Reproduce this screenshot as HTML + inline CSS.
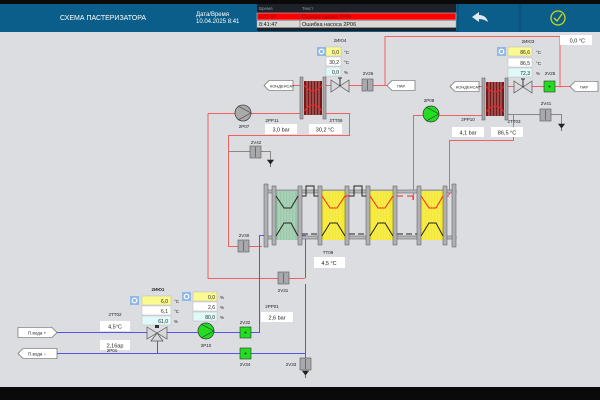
<!DOCTYPE html>
<html><head><meta charset="utf-8"><style>
html,body{margin:0;padding:0;width:600px;height:400px;overflow:hidden;background:#dcdde1;font-family:"Liberation Sans",sans-serif}
svg{display:block}
text{font-family:"Liberation Sans",sans-serif}
</style></head><body>
<svg width="600" height="400" viewBox="0 0 600 400" xmlns="http://www.w3.org/2000/svg">
<defs>
<g id="gear"><rect width="9" height="9" fill="#8fb8e8"/><circle cx="4.5" cy="4.5" r="2.3" fill="none" stroke="#fff" stroke-width="1.2"/></g>
<g id="hx"><rect x="0" y="0" width="3" height="42" fill="#a8a8ac" stroke="#555" stroke-width=".5"/><rect x="23" y="0" width="3" height="42" fill="#a8a8ac" stroke="#555" stroke-width=".5"/>
<rect x="4" y="4" width="18" height="34" fill="#7a1818"/>
<g stroke="#e8c8c8" stroke-width=".6"><line x1="7" y1="4" x2="7" y2="38"/><line x1="10" y1="4" x2="10" y2="38"/><line x1="13" y1="4" x2="13" y2="38"/><line x1="16" y1="4" x2="16" y2="38"/><line x1="19" y1="4" x2="19" y2="38"/></g>
<path d="M4 8 Q13 20 22 8 M4 34 Q13 22 22 34" stroke="#ff2020" fill="none" stroke-width="1"/></g>
<g id="valve"><path d="M0 0 L9 6 L0 12Z M18 0 L9 6 L18 12Z" fill="#d8d8dc" stroke="#555" stroke-width=".7"/><line x1="9" y1="6" x2="9" y2="-2" stroke="#333"/><path d="M7 -2 H11" stroke="#333"/></g>
<g id="gv"><rect width="11" height="12" fill="#a9a9ad" stroke="#555" stroke-width=".6"/><line x1="5.5" y1="1" x2="5.5" y2="11" stroke="#444" stroke-width=".6"/></g>
<g id="grv"><rect width="11" height="11" fill="#22dd22" stroke="#333" stroke-width=".6"/><circle cx="5.5" cy="5.5" r="1" fill="#333"/></g>
<g id="drain"><path d="M-3 0 L3 0 L0 4Z M0 4 V7" fill="#222" stroke="#222" stroke-width=".6"/></g>
</defs>
<!-- header -->
<rect x="0" y="0" width="600" height="32" fill="#0b5e8a"/>
<rect x="0" y="0" width="600" height="4" fill="#0a0a0a"/>
<text x="60" y="20" fill="#fff" font-size="7">СХЕМА ПАСТЕРИЗАТОРА</text>
<text x="196" y="16" fill="#fff" font-size="6">Дата/Время</text>
<text x="196" y="23" fill="#fff" font-size="6">10.04.2025 8:41</text>
<rect x="257" y="4" width="199" height="27" fill="#1c2228"/>
<text x="259" y="10" fill="#8899a8" font-size="4.5">Время</text><text x="302" y="10" fill="#8899a8" font-size="4.5">Текст</text>
<rect x="257" y="13" width="199" height="7" fill="#ff0000" stroke="#ddd" stroke-width=".5"/>
<rect x="257" y="20.5" width="199" height="7" fill="#d8d8d8" stroke="#999" stroke-width=".5"/>
<line x1="300" y1="13" x2="300" y2="27.5" stroke="#555" stroke-width=".5"/>
<text x="259" y="18.5" fill="#880000" font-size="5">8:41:47</text><text x="302" y="18.5" fill="#880000" font-size="5">Ошибка насоса 2P06</text>
<text x="259" y="26" fill="#111" font-size="5.5">8:41:47</text><text x="302" y="26" fill="#111" font-size="5.5">Ошибка насоса 2P06</text>
<line x1="458" y1="4" x2="458" y2="32" stroke="#07456a"/><line x1="520" y1="4" x2="520" y2="32" stroke="#07456a"/>
<path d="M472 17 L479 12 L479 15 Q486 15 488 22 Q484 19 479 19 L479 22Z" fill="#e0e8f0"/>
<circle cx="558" cy="18" r="7" fill="none" stroke="#c8d820" stroke-width="1.3"/><path d="M554 18 L557 21 L562 14" fill="none" stroke="#c8d820" stroke-width="1.3"/>
<!-- bottom bar -->
<rect x="0" y="387" width="600" height="13" fill="#0a0a0a"/>

<!-- red lines -->
<g stroke="#f06060" stroke-width="1" fill="none">
<path d="M293 85.5 H300 M326 85.5 H331 M349 85.5 H387 M385 85.5 V36.5 H560 V87.5"/>
<path d="M479 86.5 H482 M508 86.5 H514 M532 86.5 H570"/>
<path d="M208 113.5 H235 M251 113.5 H300 M326 113.5 H349.5 V135.5 H228.5 V246.5 H238 M249 246.5 H262"/>
<path d="M208 113.5 V278.5 H305"/>
<path d="M413.5 200 V115.5 H423 M439 115.5 H482"/>
<path d="M449.5 195 V140.5 H513.5 V115"/>
<path d="M413 195 V200 M449 190 V195"/>
</g>
<g stroke="#888" stroke-width="1" fill="none">
<path d="M228 151.5 H250 M261 151.5 H270.5 V160"/>
<path d="M508 114.5 H540 M551 114.5 H561.5 V124"/>
</g>
<!-- blue lines -->
<g stroke="#5555ee" stroke-width="1" fill="none">
<path d="M57 332.5 H147 M164 332.5 H198 M214 332.5 H240 M250 332.5 H259.5 V235.5 H264"/>
<path d="M57 353.5 H240 M250 353.5 H305.5 V358 M305.5 235 V278 M305.5 284 V358 M157.5 339 V353.5 M298 235.5 H305.5"/>
</g>

<!-- top left exchanger -->
<use href="#hx" x="300" y="77"/>
<use href="#gear" x="317" y="47"/>
<rect x="326" y="47" width="15" height="9" fill="#fafa90" stroke="#bbb" stroke-width=".5"/>
<rect x="326" y="57" width="15" height="9" fill="#fff" stroke="#bbb" stroke-width=".5"/>
<rect x="326" y="67" width="15" height="9" fill="#e0fafa" stroke="#bbb" stroke-width=".5"/>
<g font-size="5" fill="#222" text-anchor="end"><text x="339" y="54">0,0</text><text x="339" y="64">30,2</text><text x="339" y="74">0,0</text></g>
<g font-size="4.5" fill="#222"><text x="344" y="54">°C</text><text x="344" y="64">°C</text><text x="344" y="74">%</text></g>
<text x="340" y="42" font-size="4.5" fill="#222" text-anchor="middle">2ИЮ4</text>
<use href="#valve" x="331" y="80"/>
<use href="#gv" x="362" y="79"/><text x="368" y="75" font-size="4.5" fill="#222" text-anchor="middle">2V26</text>
<path d="M392 80.5 H415 V90.5 H392 L387 85.5Z" fill="#fff" stroke="#555" stroke-width=".6"/><text x="397" y="87.5" font-size="4" fill="#222">ПАР</text>
<path d="M269 80.5 H293 V90.5 H269 L264 85.5Z" fill="#fff" stroke="#555" stroke-width=".6"/><text x="270" y="87.5" font-size="4" fill="#222">КОНДЕНСАТ</text>
<circle cx="243" cy="113" r="8" fill="#aaa" stroke="#444" stroke-width=".8"/><path d="M238 106 L251 113 L238 120" fill="none" stroke="#444" stroke-width=".7"/>
<text x="244" y="128" font-size="4.5" fill="#222" text-anchor="middle">2P07</text>
<text x="272" y="122" font-size="4.5" fill="#222" text-anchor="middle">2PP11</text>
<rect x="265" y="124" width="32" height="10" fill="#fff"/><text x="281" y="131.5" font-size="5.5" fill="#222" text-anchor="middle">3,0 bar</text>
<text x="336" y="122" font-size="4.5" fill="#222" text-anchor="middle">2TT06</text>
<rect x="309" y="124" width="33" height="10" fill="#fff"/><text x="325" y="131.5" font-size="5.5" fill="#222" text-anchor="middle">30,2 °C</text>
<use href="#gv" x="250" y="146"/><text x="256" y="144" font-size="4.5" fill="#222" text-anchor="middle">2V42</text>
<use href="#drain" x="270.5" y="160"/>

<!-- top right -->
<rect x="560" y="35" width="32" height="10" fill="#fff"/><text x="585" y="42.5" font-size="5.5" fill="#222" text-anchor="end">0,0 °C</text>
<use href="#hx" x="482" y="78"/>
<use href="#gear" x="497" y="47"/>
<rect x="508" y="47" width="24" height="9" fill="#fafa90" stroke="#bbb" stroke-width=".5"/>
<rect x="508" y="58" width="24" height="9" fill="#fff" stroke="#bbb" stroke-width=".5"/>
<rect x="508" y="68" width="24" height="9" fill="#e0fafa" stroke="#bbb" stroke-width=".5"/>
<g font-size="5" fill="#222" text-anchor="end"><text x="530" y="54">86,6</text><text x="530" y="65">86,5</text><text x="530" y="75">72,3</text></g>
<g font-size="4.5" fill="#222"><text x="536" y="54">°C</text><text x="536" y="65">°C</text><text x="536" y="75">%</text></g>
<text x="528" y="43" font-size="4.5" fill="#222" text-anchor="middle">2ИЮ3</text>
<use href="#valve" x="514" y="81"/>
<use href="#grv" x="544" y="81"/><text x="550" y="75" font-size="4.5" fill="#222" text-anchor="middle">2V25</text>
<path d="M575 81.5 H598 V91.5 H575 L570 86.5Z" fill="#fff" stroke="#555" stroke-width=".6"/><text x="580" y="88.5" font-size="4" fill="#222">ПАР</text>
<path d="M455 81.5 H479 V91.5 H455 L450 86.5Z" fill="#fff" stroke="#555" stroke-width=".6"/><text x="456" y="88.5" font-size="4" fill="#222">КОНДЕНСАТ</text>
<circle cx="431" cy="114" r="8" fill="#22dd22" stroke="#333" stroke-width=".7"/><path d="M426 107 L439 114 L426 121" fill="none" stroke="#333" stroke-width=".6"/>
<text x="429" y="102" font-size="4.5" fill="#222" text-anchor="middle">2P08</text>
<text x="468" y="121" font-size="4.5" fill="#222" text-anchor="middle">2PP10</text>
<rect x="452" y="127" width="32" height="10" fill="#fff"/><text x="468" y="134.5" font-size="5.5" fill="#222" text-anchor="middle">4,1 bar</text>
<text x="514" y="123" font-size="4.5" fill="#222" text-anchor="middle">2TT03</text>
<rect x="491" y="127" width="32" height="10" fill="#fff"/><text x="507" y="134.5" font-size="5.5" fill="#222" text-anchor="middle">86,5 °C</text>
<use href="#gv" x="540" y="109"/><text x="546" y="105" font-size="4.5" fill="#222" text-anchor="middle">2V41</text>
<use href="#drain" x="561.5" y="124"/>

<!-- pasteurizer -->
<g fill="none" stroke="#666" stroke-width=".6">
<rect x="266" y="190" width="190" height="3" fill="#b8b8bc"/>
<rect x="266" y="236" width="190" height="3" fill="#b8b8bc"/>
</g>
<rect x="276" y="191" width="22" height="49" fill="#9ac8a8"/>
<rect x="322" y="191" width="23" height="49" fill="#f5e830"/>
<rect x="370" y="191" width="23" height="49" fill="#f5e830"/>
<rect x="421" y="191" width="22" height="49" fill="#f5e830"/>
<g stroke="#fff" stroke-width=".4" opacity=".7">
<path d="M279 191V240M282 191V240M285 191V240M288 191V240M291 191V240M294 191V240M325 191V240M328 191V240M331 191V240M334 191V240M337 191V240M340 191V240M373 191V240M376 191V240M379 191V240M382 191V240M385 191V240M388 191V240M424 191V240M427 191V240M430 191V240M433 191V240M436 191V240M439 191V240"/>
</g>
<g fill="#b0b0b4" stroke="#555" stroke-width=".5">
<rect x="264" y="184" width="4" height="63"/><rect x="272" y="186" width="4" height="59"/><rect x="298" y="186" width="4" height="59"/>
<rect x="318" y="186" width="4" height="59"/><rect x="345" y="186" width="4" height="59"/>
<rect x="366" y="186" width="4" height="59"/><rect x="393" y="186" width="4" height="59"/>
<rect x="417" y="186" width="4" height="59"/><rect x="443" y="186" width="4" height="59"/><rect x="452" y="184" width="4" height="63"/>
</g>
<g fill="none" stroke-width="1">
<path d="M276 196 L284 208 H291 L298 196" stroke="#222"/>
<path d="M276 236 L284 223 H291 L298 236" stroke="#222"/>
<path d="M322 196 L330 208 H337 L345 196" stroke="#ff2020"/>
<path d="M322 236 L330 223 H337 L345 236" stroke="#222"/>
<path d="M370 196 L378 208 H385 L393 196" stroke="#ff2020"/>
<path d="M370 236 L378 223 H385 L393 236" stroke="#222"/>
<path d="M421 196 L429 208 H436 L443 196" stroke="#ff2020"/>
<path d="M421 236 L429 223 H436 L443 236" stroke="#222"/>
<path d="M302 196 H306 V186 H314 V196 H318" stroke="#222"/>
<path d="M349 196 H354 V186 H362 V196 H366" stroke="#222"/>
<path d="M349 196 H345 M397 196 H403 M407 196 H413" stroke="#ff2020"/>
<path d="M413 196 V200 M447 196 H449" stroke="#ff2020"/>
<path d="M302 234 H318 M349 234 H366 M397 234 H417" stroke="#222" stroke-dasharray="6 3"/>
</g>
<text x="328" y="254" font-size="4.5" fill="#222" text-anchor="middle">TT09</text>
<rect x="314" y="257" width="31" height="11" fill="#fff"/><text x="329" y="265" font-size="5.5" fill="#222" text-anchor="middle">4,5 °C</text>
<use href="#gv" x="238" y="240"/><text x="244" y="237" font-size="4.5" fill="#222" text-anchor="middle">2V30</text>
<use href="#gv" x="278" y="272"/><text x="283" y="292" font-size="4.5" fill="#222" text-anchor="middle">2V31</text>

<!-- bottom -->
<path d="M18 327.5 H52 L57 332.5 L52 337.5 H18Z" fill="#fff" stroke="#555" stroke-width=".6"/><text x="28" y="334.5" font-size="4.5" fill="#222">П.вода +</text>
<path d="M23 348.5 H57 V358.5 H23 L18 353.5Z" fill="#fff" stroke="#555" stroke-width=".6"/><text x="28" y="355.5" font-size="4.5" fill="#222">П.вода −</text>
<text x="158" y="291" font-size="4.5" fill="#222" text-anchor="middle" font-weight="bold">2ИЮ1</text>
<use href="#gear" x="130" y="296"/>
<rect x="142" y="296" width="29" height="9" fill="#fafa90" stroke="#bbb" stroke-width=".5"/>
<rect x="142" y="306" width="29" height="9" fill="#fff" stroke="#bbb" stroke-width=".5"/>
<rect x="142" y="316" width="29" height="9" fill="#e0fafa" stroke="#bbb" stroke-width=".5"/>
<g font-size="5" fill="#222" text-anchor="end"><text x="168" y="303">6,0</text><text x="168" y="313">6,1</text><text x="168" y="323">61,0</text></g>
<g font-size="4.5" fill="#222"><text x="174" y="303">°C</text><text x="174" y="313">°C</text><text x="174" y="323">%</text></g>
<path d="M147 327 L157 333 L147 339Z M167 327 L157 333 L167 339Z M151 341 L157 333 L163 341Z" fill="#d8d8dc" stroke="#555" stroke-width=".7"/>
<rect x="155" y="325" width="4" height="3" fill="#333"/>
<text x="115" y="316" font-size="4.5" fill="#222" text-anchor="middle">2TT02</text>
<rect x="100" y="321" width="30" height="10" fill="#fff"/><text x="115" y="328.5" font-size="5.5" fill="#222" text-anchor="middle">4,5°C</text>
<rect x="100" y="340" width="30" height="10" fill="#fff"/><text x="115" y="347.5" font-size="5.5" fill="#222" text-anchor="middle">2,16ар</text>
<text x="112" y="352" font-size="4.5" fill="#222" text-anchor="middle">2P01</text>
<use href="#gear" x="182" y="292"/>
<rect x="193" y="292" width="24" height="9" fill="#fafa90" stroke="#bbb" stroke-width=".5"/>
<rect x="193" y="302" width="24" height="9" fill="#fff" stroke="#bbb" stroke-width=".5"/>
<rect x="193" y="312" width="24" height="9" fill="#e0fafa" stroke="#bbb" stroke-width=".5"/>
<g font-size="5" fill="#222" text-anchor="end"><text x="215" y="299">0,0</text><text x="215" y="309">2,6</text><text x="215" y="319">80,0</text></g>
<g font-size="4.5" fill="#222"><text x="220" y="299">%</text><text x="220" y="309">%</text><text x="220" y="319">%</text></g>
<circle cx="206" cy="331" r="8" fill="#22dd22" stroke="#333" stroke-width=".7"/><path d="M201 324 L214 331 L201 338" fill="none" stroke="#333" stroke-width=".6"/>
<text x="206" y="347" font-size="4.5" fill="#222" text-anchor="middle">2P10</text>
<use href="#grv" x="240" y="327"/><text x="245" y="324" font-size="4.5" fill="#222" text-anchor="middle">2V32</text>
<use href="#grv" x="240" y="348"/><text x="245" y="366" font-size="4.5" fill="#222" text-anchor="middle">2V34</text>
<text x="272" y="308" font-size="4.5" fill="#222" text-anchor="middle">2PP01</text>
<rect x="261" y="312" width="32" height="10" fill="#fff"/><text x="277" y="319.5" font-size="5.5" fill="#222" text-anchor="middle">2,6 bar</text>
<use href="#gv" x="300" y="358"/><text x="291" y="366" font-size="4.5" fill="#222" text-anchor="middle">2V33</text>
<use href="#drain" x="305.5" y="371"/>
</svg>
</body></html>
